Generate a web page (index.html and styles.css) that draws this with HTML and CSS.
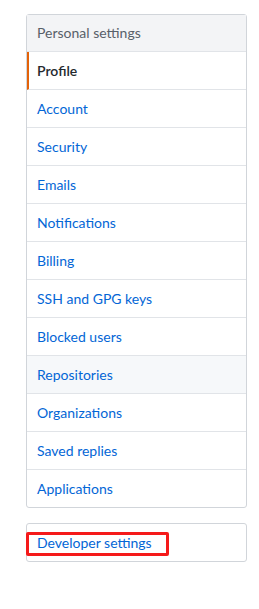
FILE: index.html
```html
<!DOCTYPE html>
<html lang="en">
<head>
    <meta charset="UTF-8">
    <meta name="viewport" content="width=device-width, initial-scale=1.0">
    <title>Settings menu</title>
    <link rel="stylesheet" href="styles.css">
</head>
<body>
    <div class="sidebar">
        <nav class="menu">
            <h3 class="menu-heading">Personal settings</h3>
            <a class="menu-item selected" href="#">Profile</a>
            <a class="menu-item" href="#">Account</a>
            <a class="menu-item" href="#">Security</a>
            <a class="menu-item" href="#">Emails</a>
            <a class="menu-item" href="#">Notifications</a>
            <a class="menu-item" href="#">Billing</a>
            <a class="menu-item" href="#">SSH and GPG keys</a>
            <a class="menu-item" href="#">Blocked users</a>
            <a class="menu-item hovered" href="#">Repositories</a>
            <a class="menu-item" href="#">Organizations</a>
            <a class="menu-item" href="#">Saved replies</a>
            <a class="menu-item" href="#">Applications</a>
        </nav>

        <nav class="menu">
            <a class="menu-item highlight" href="#">Developer settings</a>
        </nav>
    </div>
</body>
</html>
```

FILE: styles.css
```css
body {
    margin: 0;
    font-family: 'Lato', 'Liberation Sans', sans-serif;
    font-size: 14px;
    line-height: 1.5;
    background-color: #fff;
}

.sidebar {
    width: 221px;
    padding: 14px 0 0 26px;
}

.menu {
    display: flex;
    flex-direction: column;
    margin-bottom: 15px;
    border: 1px solid #d1d5da;
    border-radius: 3px;
    background-color: #fff;
}

.menu-heading {
    margin: 0;
    padding: 8px 10px;
    font-size: 14px;
    font-weight: 400;
    line-height: 20px;
    color: #586069;
    background-color: #f3f4f6;
    border-bottom: 1px solid #e1e4e8;
}

.menu-item {
    position: relative;
    padding: 8px 10px;
    line-height: 21px;
    color: #0366d6;
    text-decoration: none;
    border-bottom: 1px solid #e1e4e8;
}

.menu-item:last-child {
    border-bottom: none;
}

.menu-item.selected {
    color: #24292e;
    font-weight: 600;
    border-left: 2px solid #e36209;
    padding-left: 8px;
}

.menu-item.hovered {
    background-color: #f6f8fa;
}

/* red annotation box around the link */
.menu-item.highlight::after {
    content: "";
    position: absolute;
    left: -1px;
    top: 8px;
    width: 137px;
    height: 18px;
    border: 3px solid #f51a1a;
    border-radius: 2px;
}
```
